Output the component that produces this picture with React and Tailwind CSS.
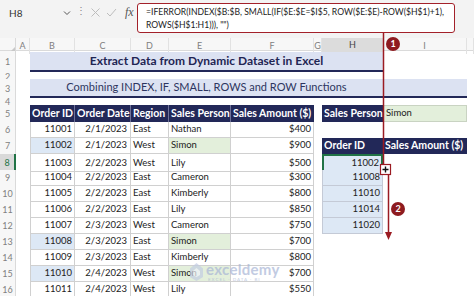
import React from "react";

const COLS =
  "grid grid-cols-[16px_14px_45px_56px_38px_62px_83px_8px_61px_84px_1fr]";

const orders = [
  ["11001", "2/1/2023", "East", "Nathan", "$400"],
  ["11002", "2/1/2023", "West", "Simon", "$900"],
  ["11003", "2/2/2023", "West", "Lily", "$500"],
  ["11004", "2/2/2023", "East", "Cameron", "$300"],
  ["11005", "2/2/2023", "East", "Kimberly", "$800"],
  ["11006", "2/2/2023", "East", "Lily", "$850"],
  ["11007", "2/3/2023", "West", "Cameron", "$750"],
  ["11008", "2/3/2023", "East", "Simon", "$700"],
  ["11009", "2/3/2023", "East", "Kimberly", "$800"],
  ["11010", "2/4/2023", "West", "Simon", "$700"],
  ["11011", "2/4/2023", "West", "Lily", "$550"],
];

const results = ["11002", "11008", "11010", "11014", "11020"];

const RowHead = ({ n, active }) => (
  <div
    className={
      active
        ? "flex items-center justify-center bg-[#d9d9d9] border-r-2 border-[#217346] text-[9px] text-[#217346]"
        : "flex items-center justify-center bg-[#f7f7f7] border-r border-[#dadada] text-[9px] text-[#808080]"
    }
  >
    {n}
  </div>
);

const FormulaBar = () => (
  <div className="flex h-[38px] bg-[#f3f3f3] text-[#333]">
    <div className="flex items-start pt-[6px] w-[76px] pl-[9px] pr-[5px] text-[10px]">
      <span className="flex-1">H8</span>
      <svg width="8" height="8" viewBox="0 0 8 8" className="mt-[3px]">
        <path d="M1 2.5 L4 5.5 L7 2.5" stroke="#555" strokeWidth="1" fill="none" />
      </svg>
    </div>
    <div className="pt-[5px] w-[10px] text-[10px] text-[#888] leading-none">⋮</div>
    <div className="flex items-start gap-[5px] pt-[7px] w-[51px] pl-[4px]">
      <svg width="11" height="11" viewBox="0 0 11 11">
        <path d="M1.5 1.5 L9.5 9.5 M9.5 1.5 L1.5 9.5" stroke="#bdbdbd" strokeWidth="1" />
      </svg>
      <svg width="11" height="11" viewBox="0 0 11 11">
        <path d="M1 6 L4 9 L10 2" stroke="#bdbdbd" strokeWidth="1" fill="none" />
      </svg>
      <span className="font-['Liberation_Serif'] italic text-[12px] leading-[10px] text-[#555] ml-[3px]">fx</span>
    </div>
    <div className="mt-[3px] w-[318px] h-[30px] rounded-[3px] border-[1.5px] border-[#a3212a] bg-white pl-[8px] pt-[2px] text-[8.6px] leading-[12.5px] text-[#222] whitespace-nowrap">
      <div>=IFERROR(INDEX($B:$B, SMALL(IF($E:$E=$I$5, ROW($E:$E)-ROW($H$1)+1),</div>
      <div>ROWS($H$1:H1))), "")</div>
    </div>
  </div>
);

const ColHeader = () => {
  const letters = ["A", "B", "C", "D", "E", "F", "G", "H", "I", ""];
  return (
    <div className={`${COLS} h-[13px] bg-[#f7f7f7] border-b border-[#dadada] text-[9px] text-[#808080]`}>
      <div className="border-r border-[#dadada] flex items-end justify-end">
        <svg width="7" height="7" viewBox="0 0 7 7">
          <path d="M7 0 L7 7 L0 7 Z" fill="#c8c8c8" />
        </svg>
      </div>
      {letters.map((l, i) => (
        <div
          key={i}
          className={
            l === "H"
              ? "flex items-center justify-center bg-[#dcdcdc] border-b-2 border-[#217346] text-[#444]"
              : "flex items-center justify-center border-r border-[#e2e2e2]"
          }
        >
          {l}
        </div>
      ))}
    </div>
  );
};

const Band = ({ children, bold }) => (
  <div className="col-span-8 bg-[#dce2f2] border-b-2 border-[#222858] flex">
    <div
      className={
        bold
          ? "w-[353px] flex items-center justify-center text-[12px] font-bold text-[#1f2553]"
          : "w-[353px] flex items-center justify-center text-[11px] text-[#2d3560]"
      }
    >
      {children}
    </div>
  </div>
);

const head = "bg-[#222858] text-white font-bold text-[10.5px] flex items-center pl-[2px] border-r border-[#6e7199]";
const cell = "flex items-center text-[9.5px] text-[#222] border-b border-r border-[#d0d0d0]";

const DataRow = ({ n, row }) => {
  const [id, date, region, person, amount] = row;
  const simon = person === "Simon";
  const r = n - 8;
  return (
    <div className={`${COLS} h-4`}>
      <RowHead n={n} active={n === 8} />
      <div />
      <div className={`${cell} justify-end pr-[2px] border-l ${simon ? "bg-[#dde8f5]" : ""}`}>{id}</div>
      <div className={`${cell} justify-end pr-[3px]`}>{date}</div>
      <div className={`${cell} pl-[2px]`}>{region}</div>
      <div className={`${cell} pl-[2px] ${simon ? "bg-[#e3efdb]" : ""}`}>{person}</div>
      <div className={`${cell} justify-end pr-[2px]`}>{amount}</div>
      <div />
      {n === 7 ? (
        <div className={`${head} border-r-0`}>Order ID</div>
      ) : r >= 0 && r < results.length ? (
        <div
          className={
            n === 8
              ? "flex items-center justify-end pr-[2px] text-[9.5px] text-[#222] bg-[#dde8f5] border-2 border-[#217346]"
              : "flex items-center justify-end pr-[2px] text-[9.5px] text-[#222] bg-[#dde8f5] border-b border-r border-l border-[#c4cad6]"
          }
        >
          {results[r]}
        </div>
      ) : (
        <div />
      )}
      {n === 7 ? <div className={`${head} border-r-0`}>Sales Amount ($)</div> : <div />}
      <div />
    </div>
  );
};

const Sheet = () => (
  <div>
    <ColHeader />
    <div className={`${COLS} h-[19px]`}>
      <RowHead n={1} />
      <div />
      <div className="col-span-8 pt-[1px] flex">
        <Band bold>Extract Data from Dynamic Dataset in Excel</Band>
      </div>
      <div />
    </div>
    <div className={`${COLS} h-[9px]`}>
      <RowHead n={2} />
    </div>
    <div className={`${COLS} h-[16px]`}>
      <RowHead n={3} />
      <div />
      <Band>Combining INDEX, IF, SMALL, ROWS and ROW Functions</Band>
      <div />
    </div>
    <div className={`${COLS} h-[10px]`}>
      <RowHead n={4} />
    </div>
    <div className={`${COLS} h-[17px]`}>
      <RowHead n={5} />
      <div />
      <div className={head}>Order ID</div>
      <div className={head}>Order Date</div>
      <div className={head}>Region</div>
      <div className={head}>Sales Person</div>
      <div className={`${head} border-r-0`}>Sales Amount ($)</div>
      <div />
      <div className={`${head} border-r-0`}>Sales Person</div>
      <div className="flex items-center pl-[2px] bg-[#e3efdb] border border-[#c9d3c2] text-[9.5px] text-[#222]">Simon</div>
      <div />
    </div>
    {orders.map((row, i) => (
      <DataRow key={i} n={i + 6} row={row} />
    ))}
  </div>
);

const Badge = ({ n, className }) => (
  <div
    className={`absolute w-[14px] h-[14px] rounded-full bg-[#8e1b20] text-white text-[9px] font-bold flex items-center justify-center ${className}`}
  >
    {n}
  </div>
);

const Overlay = () => (
  <>
    <svg className="absolute left-0 top-0 pointer-events-none" width="474" height="296">
      <line x1="383.5" y1="33" x2="383.5" y2="165" stroke="#9b1b22" strokeWidth="1.5" />
      <line x1="388.5" y1="175" x2="388.5" y2="234" stroke="#9b1b22" strokeWidth="1.5" />
      <path d="M385 232 L392 232 L388.5 240 Z" fill="#9b1b22" />
      <rect x="380.5" y="164.5" width="10" height="10" fill="white" stroke="#9b1b22" strokeWidth="1.2" />
      <path d="M385.5 166.5 V172.5 M382.5 169.5 H388.5" stroke="#111" strokeWidth="1.4" />
    </svg>
    <Badge n="1" className="left-[386px] top-[37px]" />
    <Badge n="2" className="left-[391px] top-[202px]" />
  </>
);

const Watermark = () => (
  <div className="absolute left-[189px] top-[262px] flex items-start gap-[2px] opacity-70 pointer-events-none">
    <svg width="15" height="20" viewBox="0 0 15 20">
      <path d="M7.5 1 L14 6.5 V15 L7.5 19 L1 15 V6.5 Z" fill="#c3cde3" />
      <path d="M7.5 6 L11 9 V13 L7.5 15 L4 13 V9 Z" fill="#eef1f8" />
    </svg>
    <div className="flex flex-col items-start">
      <span className="text-[15px] leading-[15px] font-bold text-[#a9b6d6] tracking-[0.3px]">exceldemy</span>
      <span className="text-[4.5px] leading-[6px] text-[#a9b6d6] tracking-[1px] pl-[2px]">EXCEL · DATA · BI</span>
    </div>
  </div>
);

export default function App() {
  return (
    <div className="relative w-[474px] h-[296px] overflow-hidden bg-white font-['Lato','Liberation_Sans',sans-serif]">
      <FormulaBar />
      <Sheet />
      <Overlay />
      <Watermark />
    </div>
  );
}
